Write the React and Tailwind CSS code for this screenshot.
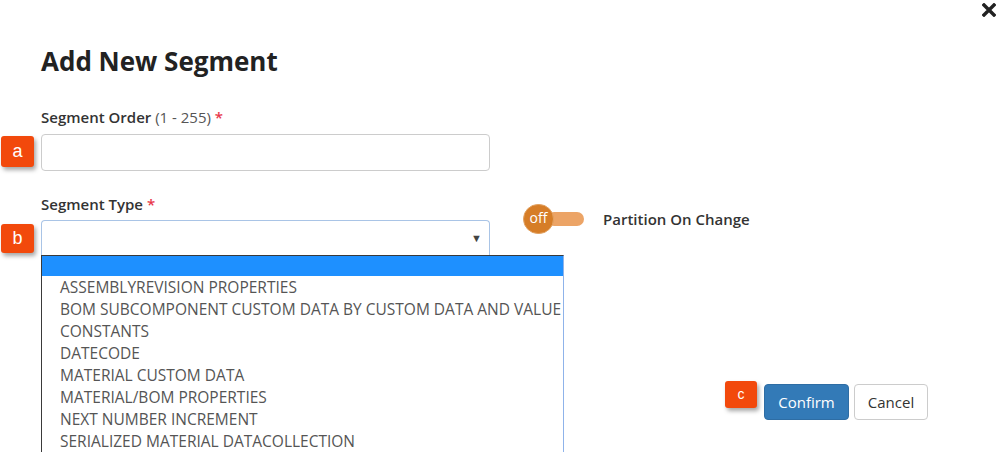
import React from 'react';

const options = [
  'ASSEMBLYREVISION PROPERTIES',
  'BOM SUBCOMPONENT CUSTOM DATA BY CUSTOM DATA AND VALUE',
  'CONSTANTS',
  'DATECODE',
  'MATERIAL CUSTOM DATA',
  'MATERIAL/BOM PROPERTIES',
  'NEXT NUMBER INCREMENT',
  'SERIALIZED MATERIAL DATACOLLECTION',
];

const Badge = ({ children, className }) => (
  <div
    className={`absolute flex items-center justify-center rounded-[3px] bg-[#f2490c] text-white font-['Liberation_Sans',sans-serif] shadow-[2px_3px_4px_rgba(0,0,0,0.35)] ${className}`}
  >
    {children}
  </div>
);

export default function App() {
  return (
    <div className="relative w-[1002px] h-[452px] overflow-hidden bg-white font-['Open_Sans',sans-serif] text-[#333]">
      {/* close button */}
      <button className="absolute top-[3px] right-[6px] w-[14px] h-[14px] text-[#222]">
        <svg viewBox="0 0 14 14" width="14" height="14">
          <path d="M2 2 L12 12 M12 2 L2 12" stroke="currentColor" strokeWidth="3.4" strokeLinecap="square" />
        </svg>
      </button>

      <div className="flex flex-col pl-[41px] pt-[46px]">
        <h2 className="text-[26px] leading-[31px] font-bold text-[#222]">Add New Segment</h2>

        <label className="mt-[30px] mb-[7px] text-[15px] leading-[20px] font-semibold text-[#333]">
          Segment Order <span className="font-normal text-[#555]">(1 - 255)</span>{' '}
          <span className="text-[#e8374a]">*</span>
        </label>
        <input className="w-[449px] h-[37px] rounded-[4px] border border-[#ccc] outline-none" />

        <div className="flex mt-[23px]">
          <div className="flex flex-col w-[449px]">
            <label className="mb-[6px] text-[15px] leading-[20px] font-semibold text-[#333]">
              Segment Type <span className="text-[#e8374a]">*</span>
            </label>
            <div className="relative h-[35px] rounded-t-[4px] border border-b-0 border-[#a9c4e6] flex items-center justify-end pr-[7px]">
              <span className="text-[11px] text-[#444]">▼</span>
              {/* open list */}
              <ul className="absolute left-[-1px] top-[34px] w-[523px] h-[220px] border border-[#3a3a3a] border-r-[#8fb3ea] border-b-0 bg-white text-[15.5px] leading-[22px] text-[#555]">
                <li className="h-[20px] bg-[#1e90ff]" />
                {options.map((o) => (
                  <li key={o} className="pl-[18px] whitespace-nowrap">{o}</li>
                ))}
              </ul>
            </div>
          </div>

          <div className="flex items-center mt-[10px] ml-[33px] h-[30px] self-start">
            <div className="relative w-[61px] h-[30px] flex items-center">
              <div className="absolute left-[24px] right-0 h-[14px] rounded-full bg-[#eca466]" />
              <div className="relative w-[31px] h-[30px] rounded-full bg-[#d67d27] border border-[#e2a262] flex items-center justify-center text-white text-[14px] leading-none pb-[2px]">
                off
              </div>
            </div>
            <span className="ml-[19px] text-[15px] font-semibold text-[#333]">Partition On Change</span>
          </div>
        </div>

        <div className="flex justify-end gap-[5px] mt-[129px] pr-[74px]">
          <button className="w-[85px] h-[36px] rounded-[4px] bg-[#337ab7] border border-[#2e6da4] text-white text-[15px]">
            Confirm
          </button>
          <button className="w-[74px] h-[36px] rounded-[4px] bg-white border border-[#ccc] text-[#333] text-[15px]">
            Cancel
          </button>
        </div>
      </div>

      <Badge className="left-[1px] top-[136px] w-[33px] h-[31px] text-[18px]">a</Badge>
      <Badge className="left-[1px] top-[224px] w-[33px] h-[29px] text-[18px]">b</Badge>
      <Badge className="left-[725px] top-[381px] w-[32px] h-[27px] text-[14px]">c</Badge>
    </div>
  );
}
